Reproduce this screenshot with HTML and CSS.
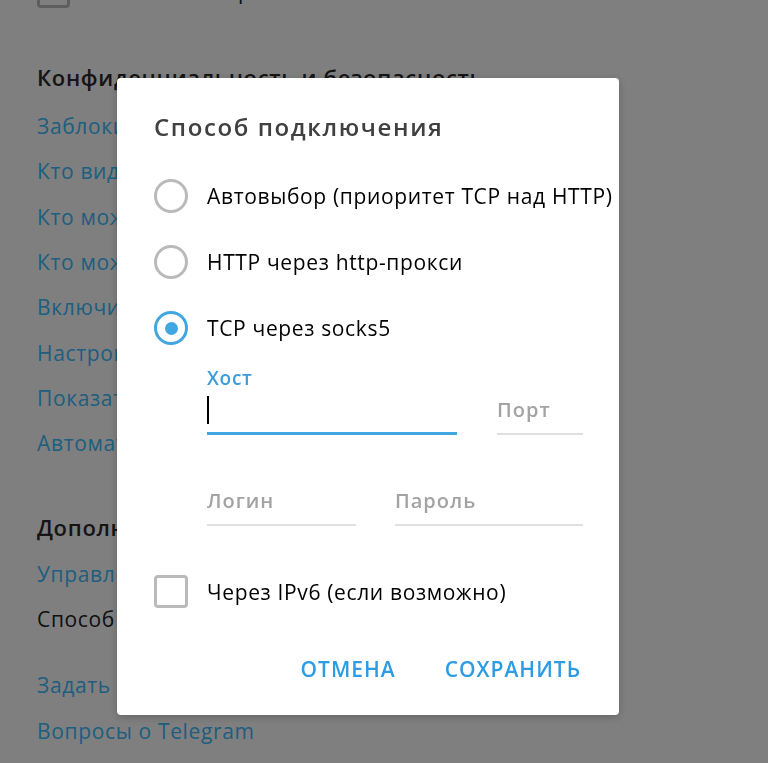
FILE: index.html
```html
<!DOCTYPE html>
<html lang="ru">
<head>
<meta charset="utf-8">
<title>Способ подключения</title>
<link rel="stylesheet" href="styles.css">
</head>
<body>
<div class="page">
  <div class="check-row top-row">
    <span class="page-check"></span>
    <span class="page-text">Показывать превью</span>
  </div>

  <h2 class="section-title first">Конфиденциальность и безопасность</h2>
  <ul class="links">
    <li class="link">Заблокированные пользователи</li>
    <li class="link">Кто видит время моего последнего входа</li>
    <li class="link">Кто может приглашать меня в группы</li>
    <li class="link">Кто может звонить мне</li>
    <li class="link">Включить код-пароль для приложения</li>
    <li class="link">Настроить облачный пароль</li>
    <li class="link">Показать все сеансы</li>
    <li class="link">Автоматически удалить мой аккаунт</li>
  </ul>

  <h2 class="section-title second">Дополнительно</h2>
  <ul class="links">
    <li class="link">Управление локальным хранилищем</li>
    <li class="plain">Способ подключения: <span class="inline-link">TCP</span></li>
  </ul>
  <ul class="links spaced">
    <li class="link">Задать вопрос</li>
    <li class="link">Вопросы о Telegram</li>
  </ul>
</div>

<div class="overlay">
  <div class="modal">
    <h1 class="modal-title">Способ подключения</h1>

    <div class="radios">
      <div class="radio-row">
        <span class="radio"></span>
        <span class="radio-label">Автовыбор (приоритет TCP над HTTP)</span>
      </div>
      <div class="radio-row">
        <span class="radio"></span>
        <span class="radio-label">HTTP через http-прокси</span>
      </div>
      <div class="radio-row">
        <span class="radio checked"><span class="radio-dot"></span></span>
        <span class="radio-label">TCP через socks5</span>
      </div>
    </div>

    <div class="fields">
      <div class="field-row host-row">
        <div class="field focused">
          <div class="field-label">Хост</div>
          <div class="field-value"><span class="caret"></span></div>
        </div>
        <div class="field">
          <div class="field-label"></div>
          <div class="field-value placeholder">Порт</div>
        </div>
      </div>
      <div class="field-row auth-row">
        <div class="field">
          <div class="field-label"></div>
          <div class="field-value placeholder">Логин</div>
        </div>
        <div class="field">
          <div class="field-label"></div>
          <div class="field-value placeholder">Пароль</div>
        </div>
      </div>
    </div>

    <div class="check-row ipv6">
      <span class="checkbox"></span>
      <span class="check-label">Через IPv6 (если возможно)</span>
    </div>

    <div class="modal-footer">
      <button class="btn" type="button">ОТМЕНА</button>
      <button class="btn" type="button">СОХРАНИТЬ</button>
    </div>
  </div>
</div>
</body>
</html>
```

FILE: styles.css
```css
* {
  box-sizing: border-box;
}

html, body {
  margin: 0;
  padding: 0;
  background: #ffffff;
  overflow: hidden;
  height: 100%;
}

body {
  font-family: "Open Sans", "Noto Sans", "DejaVu Sans", sans-serif;
  font-size: 21px;
  letter-spacing: 0.65px;
  color: #000;
}

/* ---------- background settings page ---------- */

.page {
  padding-left: 37px;
}

.check-row {
  display: flex;
  align-items: center;
  gap: 19px;
}

.top-row {
  margin-top: -25px;
  height: 33px;
}

.page-check {
  width: 33px;
  height: 33px;
  border: 3px solid #bdbdbd;
  border-radius: 4px;
  flex: none;
}

.page-text {
  line-height: 33px;
  color: #222;
  white-space: nowrap;
}

.section-title {
  margin: 0;
  font-size: 22px;
  font-weight: 600;
  letter-spacing: 0.68px;
  line-height: 30px;
  color: #2a2a2a;
  white-space: nowrap;
}

.section-title.first {
  margin-top: 54px;
  margin-bottom: 12px;
}

.section-title.second {
  margin-top: 45px;
  margin-bottom: 10px;
}

.links {
  list-style: none;
  margin: 0;
  padding: 0;
}

.links.spaced {
  margin-top: 21px;
}

.link,
.plain {
  line-height: 45.33px;
  height: 45.33px;
  white-space: nowrap;
}

.link,
.inline-link {
  color: #3cbcff;
}

.plain {
  color: #222;
}

/* ---------- modal ---------- */

.overlay {
  position: fixed;
  inset: 0;
  background: rgba(0, 0, 0, 0.5);
  padding: 78px 0 0 117px;
}

.modal {
  width: 502px;
  height: 637px;
  background: #ffffff;
  border-radius: 4px;
  box-shadow: 0 2px 8px rgba(0, 0, 0, 0.22);
  padding: 34px 36px 28px 37px;
}

.modal-title {
  margin: 0 0 37px;
  font-size: 24px;
  font-weight: 600;
  letter-spacing: 1.6px;
  line-height: 30px;
  color: #404040;
  white-space: nowrap;
}

.radios {
  display: flex;
  flex-direction: column;
  gap: 32px;
}

.radio-row {
  display: flex;
  align-items: center;
  gap: 19px;
  height: 34px;
}

.radio {
  width: 34px;
  height: 34px;
  border: 3px solid #bababa;
  border-radius: 50%;
  flex: none;
  display: flex;
  align-items: center;
  justify-content: center;
}

.radio.checked {
  border-color: #40a7e3;
}

.radio-dot {
  width: 13px;
  height: 13px;
  border-radius: 50%;
  background: #40a7e3;
}

.radio-label,
.check-label {
  line-height: 34px;
  white-space: nowrap;
  color: #000;
}

.fields {
  margin: 21px 0 0 53px;
  display: flex;
  flex-direction: column;
  gap: 22px;
}

.field-row {
  display: grid;
}

.host-row {
  grid-template-columns: 250px 86px;
  column-gap: 40px;
}

.auth-row {
  grid-template-columns: 149px 188px;
  column-gap: 39px;
}

.field {
  padding-bottom: 9px;
  border-bottom: 2px solid #e0e0e0;
}

.field.focused {
  padding-bottom: 8px;
  border-bottom: 3px solid #40a7e3;
}

.field-label {
  height: 24px;
  line-height: 24px;
  font-size: 19px;
  font-weight: 600;
  letter-spacing: 0.75px;
  color: #3d9ddb;
  margin-bottom: 6px;
}

.field-value {
  height: 28px;
  line-height: 28px;
  font-size: 20px;
}

.placeholder {
  font-weight: 600;
  letter-spacing: 1px;
  color: #a3a3a3;
}

.caret {
  display: inline-block;
  width: 2px;
  height: 28px;
  background: #000;
  vertical-align: top;
}

.ipv6 {
  margin-top: 49px;
  height: 33px;
}

.checkbox {
  width: 34px;
  height: 33px;
  border: 3px solid #bababa;
  border-radius: 4px;
  flex: none;
}

.modal-footer {
  margin-top: 43px;
  margin-right: -10px;
  display: flex;
  justify-content: flex-end;
  gap: 25px;
}

.btn {
  font-family: inherit;
  font-size: 21px;
  font-weight: 600;
  letter-spacing: 1px;
  line-height: 36px;
  height: 36px;
  padding: 0 12px;
  border: 0;
  background: transparent;
  color: #2d9ce2;
  cursor: pointer;
}
```
